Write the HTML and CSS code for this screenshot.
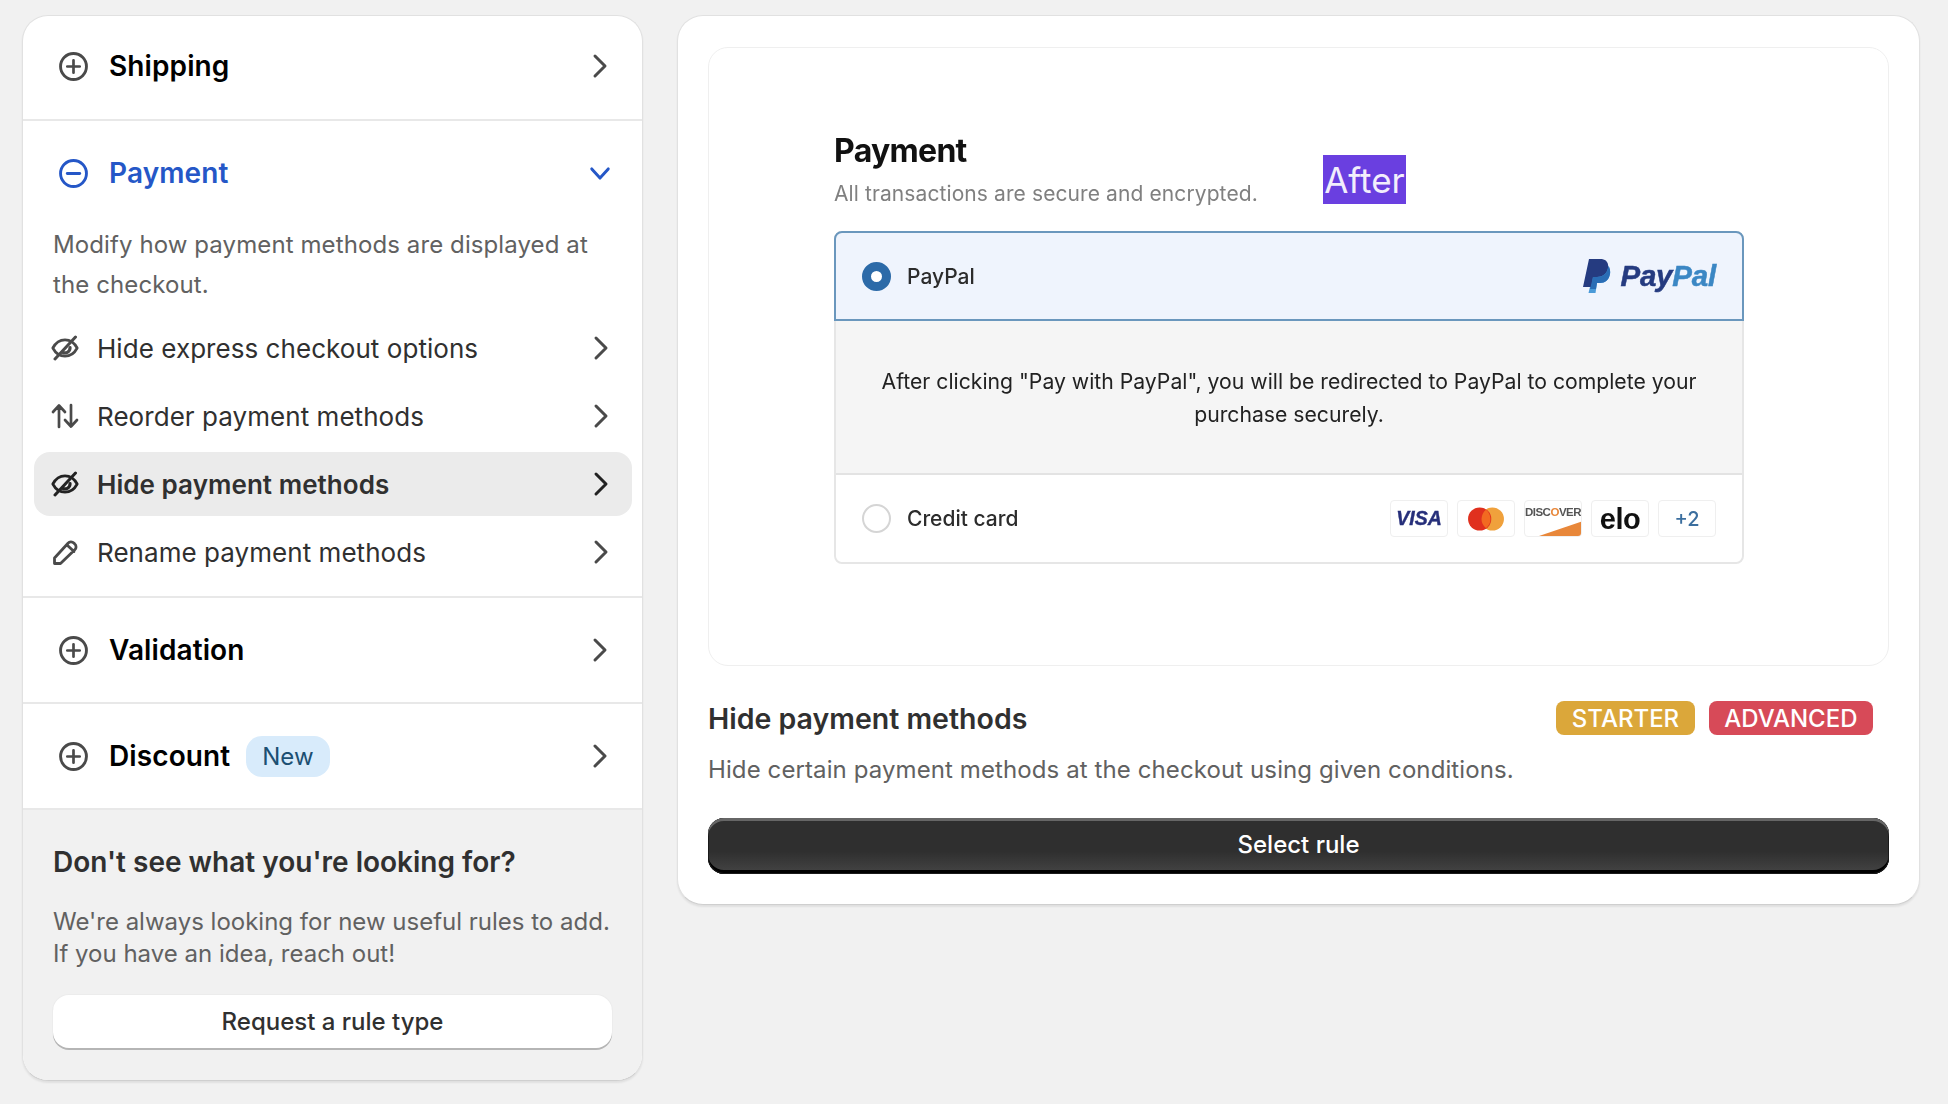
FILE: index.html
```html
<!DOCTYPE html>
<html lang="en">
<head>
<meta charset="utf-8">
<title>Rules</title>
<link rel="stylesheet" href="styles.css">
</head>
<body>
<svg class="defs" width="0" height="0" aria-hidden="true">
  <defs>
    <symbol id="chev-r" viewBox="0 0 16 28"><path d="M3 4l10 10L3 24" fill="none" stroke="currentColor" stroke-width="3" stroke-linecap="round" stroke-linejoin="round"/></symbol>
    <symbol id="plus" viewBox="0 0 28 28"><circle cx="14" cy="14" r="12.5" fill="none" stroke="currentColor" stroke-width="2.8"/><path d="M14 8v12M8 14h12" fill="none" stroke="currentColor" stroke-width="2.6" stroke-linecap="round"/></symbol>
    <symbol id="minus" viewBox="0 0 28 28"><circle cx="14" cy="14" r="12.5" fill="none" stroke="currentColor" stroke-width="2.8"/><path d="M8 14h12" fill="none" stroke="currentColor" stroke-width="2.8" stroke-linecap="round"/></symbol>
    <symbol id="eye" viewBox="0 0 28 26"><path d="M1.800 13C5 7 9 4.800 14 4.800S23 7 26.200 13C23 19 19 21.200 14 21.200S5 19 1.800 13z" fill="none" stroke="currentColor" stroke-width="2.700" stroke-linejoin="round"/><path d="M19 12.500a5 5 0 0 1-7 5" fill="none" stroke="currentColor" stroke-width="3.200" stroke-linecap="round"/><path d="M24.500 2L4 24" fill="none" stroke="currentColor" stroke-width="3" stroke-linecap="round"/></symbol>
    <symbol id="sort" viewBox="0 0 28 26"><path d="M8 24V3M2 9l6-6.500L14 9M20 2v21M14 17l6 6.500L26 17" fill="none" stroke="currentColor" stroke-width="2.700" stroke-linecap="round" stroke-linejoin="round"/></symbol>
    <symbol id="pencil" viewBox="0 0 28 26"><path d="M3.500 24.500V19L17 4.200a4 4 0 0 1 5.800-.2l1 1a4 4 0 0 1 0 5.800L9.500 24.500zM16 6l7 6.500" fill="none" stroke="currentColor" stroke-width="2.800" stroke-linejoin="round" stroke-linecap="round"/></symbol>
  </defs>
</svg>

<main class="layout">
  <aside class="card menu">
    <section class="section section-first">
      <div class="head">
        <svg class="head-icon"><use href="#plus"/></svg>
        <span class="head-title">Shipping</span>
        <svg class="chev"><use href="#chev-r"/></svg>
      </div>
    </section>

    <section class="section section-open">
      <div class="head head-active">
        <svg class="head-icon"><use href="#minus"/></svg>
        <span class="head-title">Payment</span>
        <svg class="chev-down" viewBox="0 0 24 16"><path d="M3 3l9 10 9-10" fill="none" stroke="currentColor" stroke-width="3.200" stroke-linecap="round" stroke-linejoin="round"/></svg>
      </div>
      <p class="section-desc">Modify how payment methods are displayed at the checkout.</p>
      <ul class="items">
        <li class="item"><svg class="item-icon"><use href="#eye"/></svg><span class="item-label">Hide express checkout options</span><svg class="chev"><use href="#chev-r"/></svg></li>
        <li class="item"><svg class="item-icon"><use href="#sort"/></svg><span class="item-label">Reorder payment methods</span><svg class="chev"><use href="#chev-r"/></svg></li>
        <li class="item item-selected"><svg class="item-icon"><use href="#eye"/></svg><span class="item-label">Hide payment methods</span><svg class="chev"><use href="#chev-r"/></svg></li>
        <li class="item"><svg class="item-icon"><use href="#pencil"/></svg><span class="item-label">Rename payment methods</span><svg class="chev"><use href="#chev-r"/></svg></li>
      </ul>
    </section>

    <section class="section">
      <div class="head">
        <svg class="head-icon"><use href="#plus"/></svg>
        <span class="head-title">Validation</span>
        <svg class="chev"><use href="#chev-r"/></svg>
      </div>
    </section>

    <section class="section">
      <div class="head">
        <svg class="head-icon"><use href="#plus"/></svg>
        <span class="head-title">Discount</span>
        <span class="new-pill">New</span>
        <svg class="chev"><use href="#chev-r"/></svg>
      </div>
    </section>

    <footer class="menu-foot">
      <h2 class="foot-title">Don't see what you're looking for?</h2>
      <p class="foot-text">We're always looking for new useful rules to add. If you have an idea, reach out!</p>
      <button class="btn-light" type="button">Request a rule type</button>
    </footer>
  </aside>

  <section class="card detail">
    <div class="preview">
      <div class="mock">
        <h3 class="mock-title">Payment</h3>
        <p class="mock-sub">All transactions are secure and encrypted.</p>
        <span class="after-tag">After</span>
        <div class="pay-box">
          <div class="pay-row pay-row-on">
            <span class="radio radio-on"></span>
            <span class="pay-name">PayPal</span>
            <span class="pp-logo">
              <svg class="pp-mark" viewBox="0 0 30 36"><path d="M13 8h8c5 0 8 3 7 8-1 6-5 9-10 9h-3l-1.500 10H6.500z" fill="#4a9ad8"/><path d="M7 1h11c6 0 9 3.500 8 9-1 6-6 9-11 9h-4l-1.500 10H1z" fill="#253b80"/><path d="M11 19h4c5 0 10-3 11-9 .2-.8.2-1.500.2-2.200C27.700 9 28.500 12 28 16c-1 6-5 9-10 9h-3l-1 6H8z" fill="#2a6db5"/></svg>
              <span class="pp-word"><span class="pp-dark">Pay</span><span class="pp-light">Pal</span></span>
            </span>
          </div>
          <div class="pay-info">After clicking "Pay with PayPal", you will be redirected to PayPal to complete your purchase securely.</div>
          <div class="pay-row">
            <span class="radio"></span>
            <span class="pay-name">Credit card</span>
            <span class="brands">
              <span class="brand brand-visa">VISA</span>
              <span class="brand"><svg class="mc" viewBox="0 0 36 24"><circle cx="24" cy="12" r="11" fill="#f0a13c"/><circle cx="12" cy="12" r="11" fill="#e0301e"/><path d="M18 3.300a11 11 0 0 1 0 17.400 11 11 0 0 1 0-17.400z" fill="#f26a21"/></svg></span>
              <span class="brand brand-disc"><span class="disc-word">DISC<span class="disc-o">O</span>VER</span><svg class="disc-swoosh" viewBox="0 0 56 16" preserveAspectRatio="none"><path d="M0 16L56 0v16z" fill="#e8873a"/></svg></span>
              <span class="brand brand-elo">elo</span>
              <span class="brand brand-more">+2</span>
            </span>
          </div>
        </div>
      </div>
    </div>

    <div class="rule-head">
      <h2 class="rule-title">Hide payment methods</h2>
      <span class="plan plan-starter">STARTER</span>
      <span class="plan plan-advanced">ADVANCED</span>
    </div>
    <p class="rule-desc">Hide certain payment methods at the checkout using given conditions.</p>
    <button class="btn-dark" type="button">Select rule</button>
  </section>
</main>
</body>
</html>
```

FILE: styles.css
```css
* { box-sizing: border-box; }
html, body { margin: 0; padding: 0; }
body {
  width: 1948px;
  height: 1104px;
  overflow: hidden;
  background: #f1f1f1;
  font-family: Inter, "Liberation Sans", sans-serif;
  color: #303030;
}
.defs { position: absolute; }
.layout { display: flex; align-items: flex-start; gap: 34px; padding: 15px 28px 0 22px; }
.card {
  background: #fff;
  border: 1px solid #e1e1e1;
  border-bottom-color: #cfcfcf;
  border-radius: 26px;
  box-shadow: 0 2px 2px rgba(0,0,0,.07);
  overflow: hidden;
}
.menu { width: 621px; flex: none; height: 1066px; display: flex; flex-direction: column; }
.section { border-bottom: 2px solid #e8e8e8; }
.head { height: 104px; display: flex; align-items: center; padding: 0 34px 0 36px; color: #000; }
.section-first .head { height: 103px; padding-bottom: 3px; }
.head-icon { width: 29px; height: 29px; color: #4a4a4a; flex: none; }
.head-title { margin-left: 21px; font-size: 28px; font-weight: 600; letter-spacing: .1px; }
.chev { width: 16px; height: 28px; margin-left: auto; color: #4a4a4a; flex: none; }
.head-active { color: #2557c7; }
.head-active .head-icon { color: #2557c7; }
.chev-down { width: 22px; height: 15px; margin-left: auto; margin-right: -3px; color: #2557c7; flex: none; }
.new-pill {
  margin-left: 16px;
  height: 41px;
  padding: 0 16px;
  display: flex;
  align-items: center;
  background: #d8ebfb;
  border-radius: 16px;
  font-size: 24px;
  color: #1c4f72;
}
.section-open { padding-bottom: 12px; }
.section-desc { margin: 0 30px 11px 30px; font-size: 24px; line-height: 40px; color: #616161; letter-spacing: .1px; }
.items { list-style: none; margin: 0 10px 0 11px; padding: 0; display: flex; flex-direction: column; gap: 4px; }
.item { height: 64px; display: flex; align-items: center; padding: 0 23px 0 17px; border-radius: 16px; color: #303030; }
.item-icon { width: 28px; height: 26px; flex: none; color: #4a4a4a; }
.item-label { margin-left: 18px; font-size: 26px; letter-spacing: .05px; }
.item-selected { background: #ebebeb; }
.item-selected .item-label { font-weight: 600; }
.item-selected .item-icon, .item-selected .chev { color: #222; }
.menu-foot { flex: 1; background: #f1f1f1; padding: 34px 30px 0; }
.foot-title { margin: 0; font-size: 28px; line-height: 36px; font-weight: 600; color: #303030; }
.foot-text { margin: 26px -8px 0 0; font-size: 24px; line-height: 32px; color: #616161; }
.btn-light {
  display: block;
  width: 100%;
  height: 53px;
  margin-top: 25px;
  background: #fff;
  border: 0;
  border-radius: 16px;
  box-shadow: 0 2px 0 #b5b5b5, 0 0 0 1px #ececec;
  font: 500 24px Inter, sans-serif;
  color: #303030;
}
.detail { flex: 1; height: 890px; padding: 31px 30px 0; }
.preview { height: 619px; border: 1px solid #efefef; border-radius: 20px; padding: 80px 0 0 125px; }
.mock { position: relative; width: 910px; filter: blur(.35px); }
.mock-title { margin: 0; font-size: 32px; line-height: 46px; font-weight: 700; color: #111; letter-spacing: -.7px; }
.mock-sub { margin: 0; font-size: 21px; line-height: 40px; color: #808080; letter-spacing: .1px; }
.after-tag {
  position: absolute;
  left: 489px;
  top: 27px;
  width: 83px;
  height: 49px;
  background: #6a3fe0;
  color: #f2eefc;
  font-size: 35px;
  line-height: 51px;
  text-align: center;
}
.pay-box { margin-top: 17px; border: 2px solid #e6e6e6; border-radius: 8px; }
.pay-row { height: 87px; display: flex; align-items: center; padding: 0 26px 0 26px; background: #fff; border-radius: 0 0 8px 8px; }
.pay-row-on {
  height: 90px;
  background: #eff4fd;
  border: 2px solid #6a97bd;
  margin: -2px -2px 0;
  padding: 0 26px;
  border-radius: 8px 8px 0 0;
}
.radio { width: 29px; height: 29px; border: 2px solid #d5d5d5; border-radius: 50%; background: #fff; flex: none; }
.radio-on { border: 9.500px solid #2c6aa8; }
.pay-name { margin-left: 16px; font-size: 21px; font-weight: 500; color: #2c2c2c; }
.pp-logo { margin-left: auto; display: flex; align-items: center; gap: 8px; }
.pp-mark { width: 30px; height: 36px; }
.pp-word { font: italic 700 29.500px "Liberation Sans", sans-serif; letter-spacing: -.2px; -webkit-text-stroke: .5px currentColor; }
.pp-dark { color: #253b80; }
.pp-light { color: #3b87c4; }
.pay-info {
  height: 154px;
  padding: 44px 20px 0;
  background: #f5f5f5;
  border-bottom: 2px solid #e3e3e3;
  text-align: center;
  font-size: 21.200px;
  line-height: 33px;
  color: #222;
}
.brands { margin-left: auto; display: flex; gap: 9px; }
.brand {
  position: relative;
  width: 58px;
  height: 37px;
  border: 1px solid #efefef;
  border-radius: 4px;
  display: flex;
  align-items: center;
  justify-content: center;
  background: #fff;
  overflow: hidden;
}
.brand-visa { font: italic 700 19.500px "Liberation Sans", sans-serif; color: #262f7a; -webkit-text-stroke: .4px #262f7a; }
.mc { width: 38px; height: 26px; }
.brand-disc { align-items: flex-start; }
.disc-word { font: 700 11.500px "Liberation Sans", sans-serif; color: #555; margin-top: 5px; letter-spacing: -.5px; }
.disc-o { color: #e8873a; }
.disc-swoosh { position: absolute; left: 14px; bottom: 0; width: 44px; height: 15px; }
.brand-elo { font: 700 29px/30px "Liberation Sans", sans-serif; color: #111; letter-spacing: -.5px; }
.brand-more { font-size: 20px; font-weight: 500; color: #3c6f9f; }
.rule-head { display: flex; align-items: center; height: 36px; margin-top: 34px; }
.rule-title { margin: 0 auto 0 0; font-size: 28.500px; font-weight: 600; color: #303030; }
.plan {
  height: 34px;
  padding: 0 15.500px;
  border-radius: 8px;
  display: flex;
  align-items: center;
  color: #fff;
  font-size: 24px;
  font-weight: 500;
}
.plan-starter { background: #dba73a; }
.plan-advanced { background: #d74a58; margin-left: 14px; margin-right: 16px; }
.rule-desc { margin: 16px 0 0; font-size: 24px; line-height: 36px; color: #616161; letter-spacing: .1px; }
.btn-dark {
  display: block;
  width: 100%;
  height: 56px;
  margin-top: 30px;
  padding-bottom: 4px;
  background: linear-gradient(#2f2f2f 60%, #454545);
  border: 0;
  border-radius: 16px;
  box-shadow: inset 0 3px 0 #666, inset 0 0 0 1px #1a1a1a, inset 0 -4px 0 #000;
  font: 500 24px Inter, sans-serif;
  color: #fff;
}
```
